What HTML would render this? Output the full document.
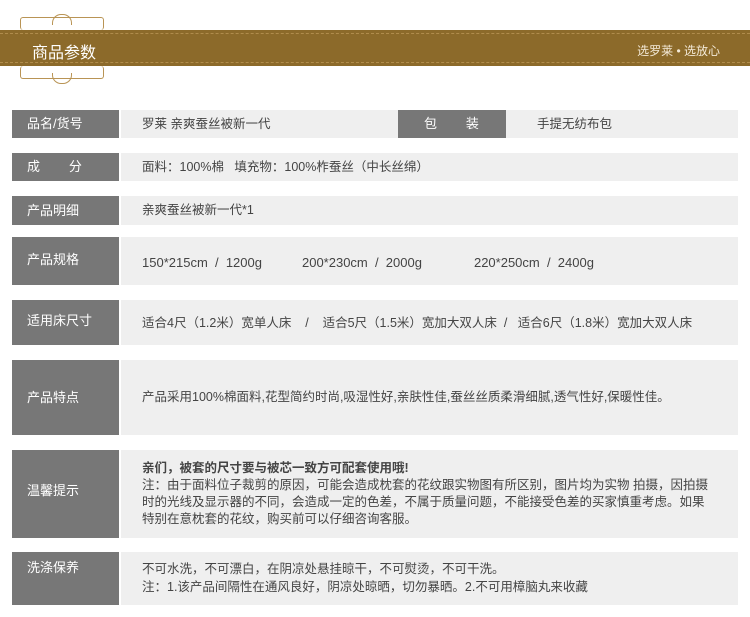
<!DOCTYPE html>
<html><head><meta charset="utf-8"><style>
body{margin:0;width:750px;height:617px;background:#fff;font-family:"Liberation Sans","Noto Sans CJK SC",sans-serif;position:relative;overflow:hidden}
.ban{position:absolute;left:0;top:30px;width:750px;height:36px;background:#8c6a2a}
.ban:before,.ban:after{content:"";position:absolute;left:0;right:0;border-top:1px dashed #b08c4c}
.ban:before{top:3px}.ban:after{bottom:3px}
.orn{position:absolute;left:20px;width:82px;height:14px;border:1px solid #b99455;border-radius:3px}
.t1{position:absolute;left:32px;top:39px;color:#fff;font-size:16px;z-index:2}
.t2{position:absolute;right:30px;top:42px;color:#f4ead8;font-size:12px}
.l{position:absolute;left:12px;width:107px;background:#777;color:#fff;font-size:13px;box-sizing:border-box;padding-left:15px}
.c{position:absolute;left:121px;width:617px;background:#efefef;color:#444;font-size:12.5px;box-sizing:border-box;padding-left:21px}
</style></head><body>
<div class="orn" style="top:17px;border-bottom:none;height:12px"></div>
<div class="orn" style="top:66px;border-top:none;height:12px"></div>
<div style="position:absolute;left:52px;top:14px;width:18px;height:10px;border:1px solid #b99455;border-radius:9px 9px 0 0;border-bottom:none"></div>
<div style="position:absolute;left:52px;top:73px;width:18px;height:10px;border:1px solid #b99455;border-radius:0 0 9px 9px;border-top:none"></div>
<div class="ban"></div>
<div class="t1">商品参数</div>
<div class="t2">选罗莱 • 选放心</div>

<div class="l" style="top:110px;height:28px;line-height:28px">品名/货号</div>
<div class="c" style="top:110px;height:28px;line-height:28px">罗莱 亲爽蚕丝被新一代</div>
<div class="l" style="top:110px;left:398px;width:108px;height:28px;line-height:28px;padding-left:26px;letter-spacing:0">包&nbsp;&nbsp;&nbsp;&nbsp;&nbsp;&nbsp;&nbsp;&nbsp;装</div>
<div style="position:absolute;left:537px;top:110px;line-height:28px;font-size:12.5px;color:#444">手提无纺布包</div>

<div class="l" style="top:153px;height:28px;line-height:28px">成&nbsp;&nbsp;&nbsp;&nbsp;&nbsp;&nbsp;&nbsp;&nbsp;分</div>
<div class="c" style="top:153px;height:28px;line-height:28px">面料：100%棉&nbsp;&nbsp;&nbsp;填充物：100%柞蚕丝（中长丝绵）</div>

<div class="l" style="top:196px;height:29px;line-height:29px">产品明细</div>
<div class="c" style="top:196px;height:29px;line-height:29px">亲爽蚕丝被新一代*1</div>

<div class="l" style="top:237px;height:48px;line-height:46px">产品规格</div>
<div class="c" style="top:237px;height:48px;line-height:52px;font-size:13px">150*215cm&nbsp;&nbsp;/&nbsp;&nbsp;1200g<span style="display:inline-block;width:40px"></span>200*230cm&nbsp;&nbsp;/&nbsp;&nbsp;2000g<span style="display:inline-block;width:52px"></span>220*250cm&nbsp;&nbsp;/&nbsp;&nbsp;2400g</div>

<div class="l" style="top:300px;height:45px;line-height:42px">适用床尺寸</div>
<div class="c" style="top:300px;height:45px;line-height:46px">适合4尺（1.2米）宽单人床&nbsp;&nbsp;&nbsp;&nbsp;/&nbsp;&nbsp;&nbsp;&nbsp;适合5尺（1.5米）宽加大双人床&nbsp;&nbsp;/&nbsp;&nbsp;&nbsp;适合6尺（1.8米）宽加大双人床</div>

<div class="l" style="top:360px;height:75px;line-height:75px">产品特点</div>
<div class="c" style="top:360px;height:75px;line-height:75px">产品采用100%棉面料,花型简约时尚,吸湿性好,亲肤性佳,蚕丝丝质柔滑细腻,透气性好,保暖性佳。</div>

<div class="l" style="top:450px;height:88px;line-height:82px">温馨提示</div>
<div class="c" style="top:450px;height:88px;line-height:17px;padding-top:10px;padding-right:30px"><b>亲们，被套的尺寸要与被芯一致方可配套使用哦!</b><br>注：由于面料位子裁剪的原因，可能会造成枕套的花纹跟实物图有所区别，图片均为实物 拍摄，因拍摄时的光线及显示器的不同，会造成一定的色差，不属于质量问题，不能接受色差的买家慎重考虑。如果特别在意枕套的花纹，购买前可以仔细咨询客服。</div>

<div class="l" style="top:552px;height:53px;line-height:32px">洗涤保养</div>
<div class="c" style="top:552px;height:53px;line-height:18px;padding-top:8px">不可水洗，不可漂白，在阴凉处悬挂晾干，不可熨烫，不可干洗。<br>注：1.该产品间隔性在通风良好，阴凉处晾晒，切勿暴晒。2.不可用樟脑丸来收藏</div>
</body></html>
